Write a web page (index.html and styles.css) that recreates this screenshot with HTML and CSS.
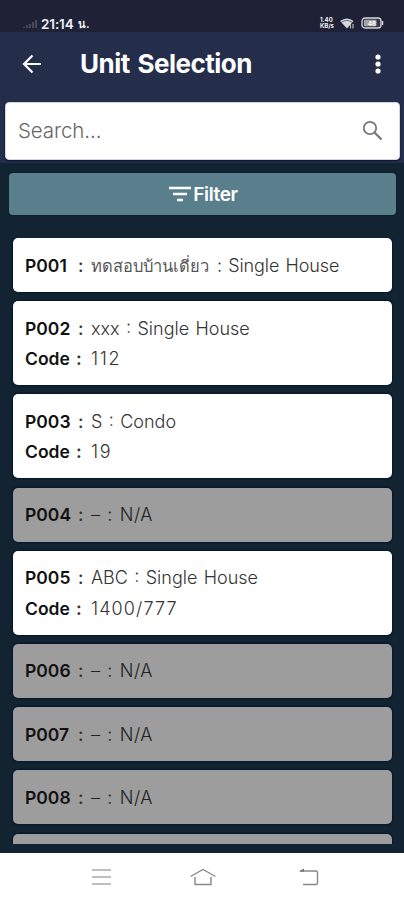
FILE: index.html
```html
<!DOCTYPE html>
<html lang="th">
<head>
<meta charset="utf-8">
<title>Unit Selection</title>
<link rel="stylesheet" href="styles.css">
</head>
<body>
<div class="status">
  <svg class="signal" width="14" height="8" viewBox="0 0 14 8"><path d="M0 7h2v1H0zM3 5h2v3H3zM6 4h2v4H6zM9 2h2v6H9zM12 0h2v8h-2z" fill="#454a5c"/></svg>
  <span class="clock">21:14</span><span class="clock-unit">น.</span>
  <span class="rate"><span>1.40</span><span>KB/s</span></span>
  <svg class="wifi" width="16" height="12" viewBox="0 0 16 12"><path d="M1 4Q8-1 14.500 4L8 11.500z" fill="#d8d8dc"/><path d="M2 5.500Q8 1.500 13.500 5.500" fill="none" stroke="#34374a" stroke-width=".7"/><path d="M11.500 7v4.500M14 7v4.500" stroke="#b8b8bc" stroke-width="1.200"/></svg>
  <svg class="battery" width="23" height="12" viewBox="0 0 23 12"><rect x="1" y="1" width="19" height="10" rx="3" fill="#34374a" stroke="#d5d5d7" stroke-width="1.300"/><rect x="3" y="2.800" width="12.500" height="6.400" rx="1" fill="#a5a5a8"/><path d="M21.500 4v4" stroke="#d5d5d7" stroke-width="1.500"/><text x="7" y="8.500" class="level">48</text></svg>
</div>
<header class="appbar">
  <svg class="back" width="20" height="20" viewBox="0 0 20 20"><path d="M19 10H2M10.500 1.500L2 10l8.500 8.500" fill="none" stroke="#fff" stroke-width="2.200"/></svg>
  <h1>Unit Selection</h1>
  <svg class="more" width="6" height="20" viewBox="0 0 6 20"><g fill="#fff"><circle cx="3" cy="3" r="2.600"/><circle cx="3" cy="10" r="2.600"/><circle cx="3" cy="17" r="2.600"/></g></svg>
</header>
<div class="searchbar">
  <div class="search"><span>Search...</span>
    <svg width="21" height="21" viewBox="0 0 21 21" fill="none" stroke="#777"><circle cx="8" cy="8" r="6.200" stroke-width="1.800"/><path d="M12.500 12.500l7 7" stroke-width="2.200"/></svg>
  </div>
</div>
<main>
  <div class="filter">
    <svg width="22" height="16" viewBox="0 0 22 16"><path d="M0 2h22M4 8h14M8 14h6" stroke="#fff" stroke-width="2.400"/></svg>
    <span>Filter</span>
  </div>
  <div class="list">
    <div class="card"><p><b>P001</b><i>:</i><span class="thai">ทดสอบบ้านเดี่ยว</span><span class="kind">: Single House</span></p></div>
    <div class="card"><p><b>P002</b><i>:</i><span>xxx : Single House</span></p><p><b class="code">Code</b><i class="strong">:</i><span class="num">112</span></p></div>
    <div class="card"><p><b>P003</b><i>:</i><span>S : Condo</span></p><p><b class="code">Code</b><i class="strong">:</i><span class="num">19</span></p></div>
    <div class="card off"><p><b>P004</b><i>:</i><span class="empty">– : N/A</span></p></div>
    <div class="card"><p><b>P005</b><i>:</i><span>ABC : Single House</span></p><p><b class="code">Code</b><i class="strong">:</i><span class="num long">1400/777</span></p></div>
    <div class="card off"><p><b>P006</b><i>:</i><span class="empty">– : N/A</span></p></div>
    <div class="card off"><p><b>P007</b><i>:</i><span class="empty">– : N/A</span></p></div>
    <div class="card off"><p><b>P008</b><i>:</i><span class="empty">– : N/A</span></p></div>
    <div class="card off"></div>
  </div>
</main>
<nav>
  <svg width="20" height="18" viewBox="0 0 20 18"><path d="M0 2h19M0 9h19M0 16h19" stroke="#aaa" stroke-width="1.600"/></svg>
  <svg class="home" width="26" height="18" viewBox="0 0 26 18" fill="none" stroke="#888" stroke-width="1.400"><path d="M.5 8.500L13 1.500l12.500 7M5 9v7.500h16V9"/></svg>
  <svg width="20" height="18" viewBox="0 0 20 18"><path d="M1 3h16q1.500 0 1.500 1.500v10.500q0 1.500-1.500 1.500H4" fill="none" stroke="#888" stroke-width="1.400"/><path d="M0 3.200L5 .5v3.300z" fill="#777"/></svg>
</nav>
</body>
</html>
```
FILE: styles.css
```css
* { box-sizing: border-box; }
body { margin: 0; width: 404px; height: 900px; overflow: hidden; display: flex; flex-direction: column; background: #122431; font-family: Inter, "Liberation Sans", "Noto Sans", sans-serif; }
.status { height: 32px; flex: none; background: #1f2137; display: flex; align-items: flex-start; padding: 17px 20px 0 23px; color: #f0f0f2; }
.signal { margin-top: 3px; }
.clock { margin-left: 4px; font-size: 13.500px; line-height: 14px; font-weight: 600; width: 35px; letter-spacing: -.1px; white-space: nowrap; }
.clock-unit { margin-left: 2px; font-size: 11px; line-height: 14px; font-weight: 600; }
.rate { margin-left: auto; display: flex; flex-direction: column; width: 14px; font-size: 6px; line-height: 6px; font-weight: 700; }
.wifi { margin-left: 5px; }
.battery { margin-left: 6px; }
.level { font-size: 6px; font-weight: 700; fill: #fff; }
.appbar { height: 65px; flex: none; background: #242e4a; display: flex; align-items: center; padding: 0 23px 2px 22px; color: #fff; }
h1 { margin: 0 auto 0 38px; font-size: 26px; line-height: 32px; font-weight: 700; letter-spacing: -.5px; word-spacing: 2px; white-space: nowrap; }
.searchbar { height: 66px; flex: none; background: #242e4a; padding: 5px 4px 3px 5px; }
.search { height: 58px; background: #fff; border-radius: 4px; border: 1px solid #d5d5df; display: flex; align-items: center; justify-content: space-between; padding: 0 16px 2px 12px; color: #666; font-size: 20.500px; letter-spacing: -.1px; font-weight: 300; box-shadow: 0 1px 2px #0a1031; }
main { flex: 1; min-height: 0; padding: 10px 12px 9px 13px; display: flex; flex-direction: column; }
.filter { height: 42px; flex: none; margin: 0 -4px; padding-left: 2px; border-radius: 4px; background: #597f8c; box-shadow: 0 0 2px #071522; display: flex; align-items: center; justify-content: center; gap: 2px; color: #fff; font-size: 19px; font-weight: 600; letter-spacing: -.4px; }
.list { flex: 1; min-height: 0; margin: 22.5px -3px 0; padding: .5px 3px 0; overflow: hidden; display: flex; flex-direction: column; gap: 9.200px; }
.card { flex: none; min-height: 54px; padding: 12.500px 12px 10.500px; background: #fff; border-radius: 5px; box-shadow: 0 0 2px 1px #06152a; color: #333; }
.off { background: #9d9d9d; }
p { margin: 0; height: 30.500px; line-height: 30.500px; font-size: 18px; font-weight: 300; word-spacing: 1.300px; display: flex; white-space: nowrap; }
b { width: 53px; font-size: 17.500px; font-weight: 600; color: #111; }
i { width: 13px; font-style: normal; font-weight: 500; }
.code { width: 51px; }
.strong { width: 15px; font-weight: 600; }
.thai { width: 126px; font-size: 16.500px; color: #555; }
.kind { letter-spacing: -.1px; }
.num { letter-spacing: 1.700px; }
.long { letter-spacing: 1.100px; }
.empty { letter-spacing: .5px; }
.off .empty { color: #222; }
nav { height: 47px; flex: none; background: #fff; display: flex; align-items: center; justify-content: space-between; padding: 1px 85px 0 92px; }
.home { margin-right: 5px; }
```
